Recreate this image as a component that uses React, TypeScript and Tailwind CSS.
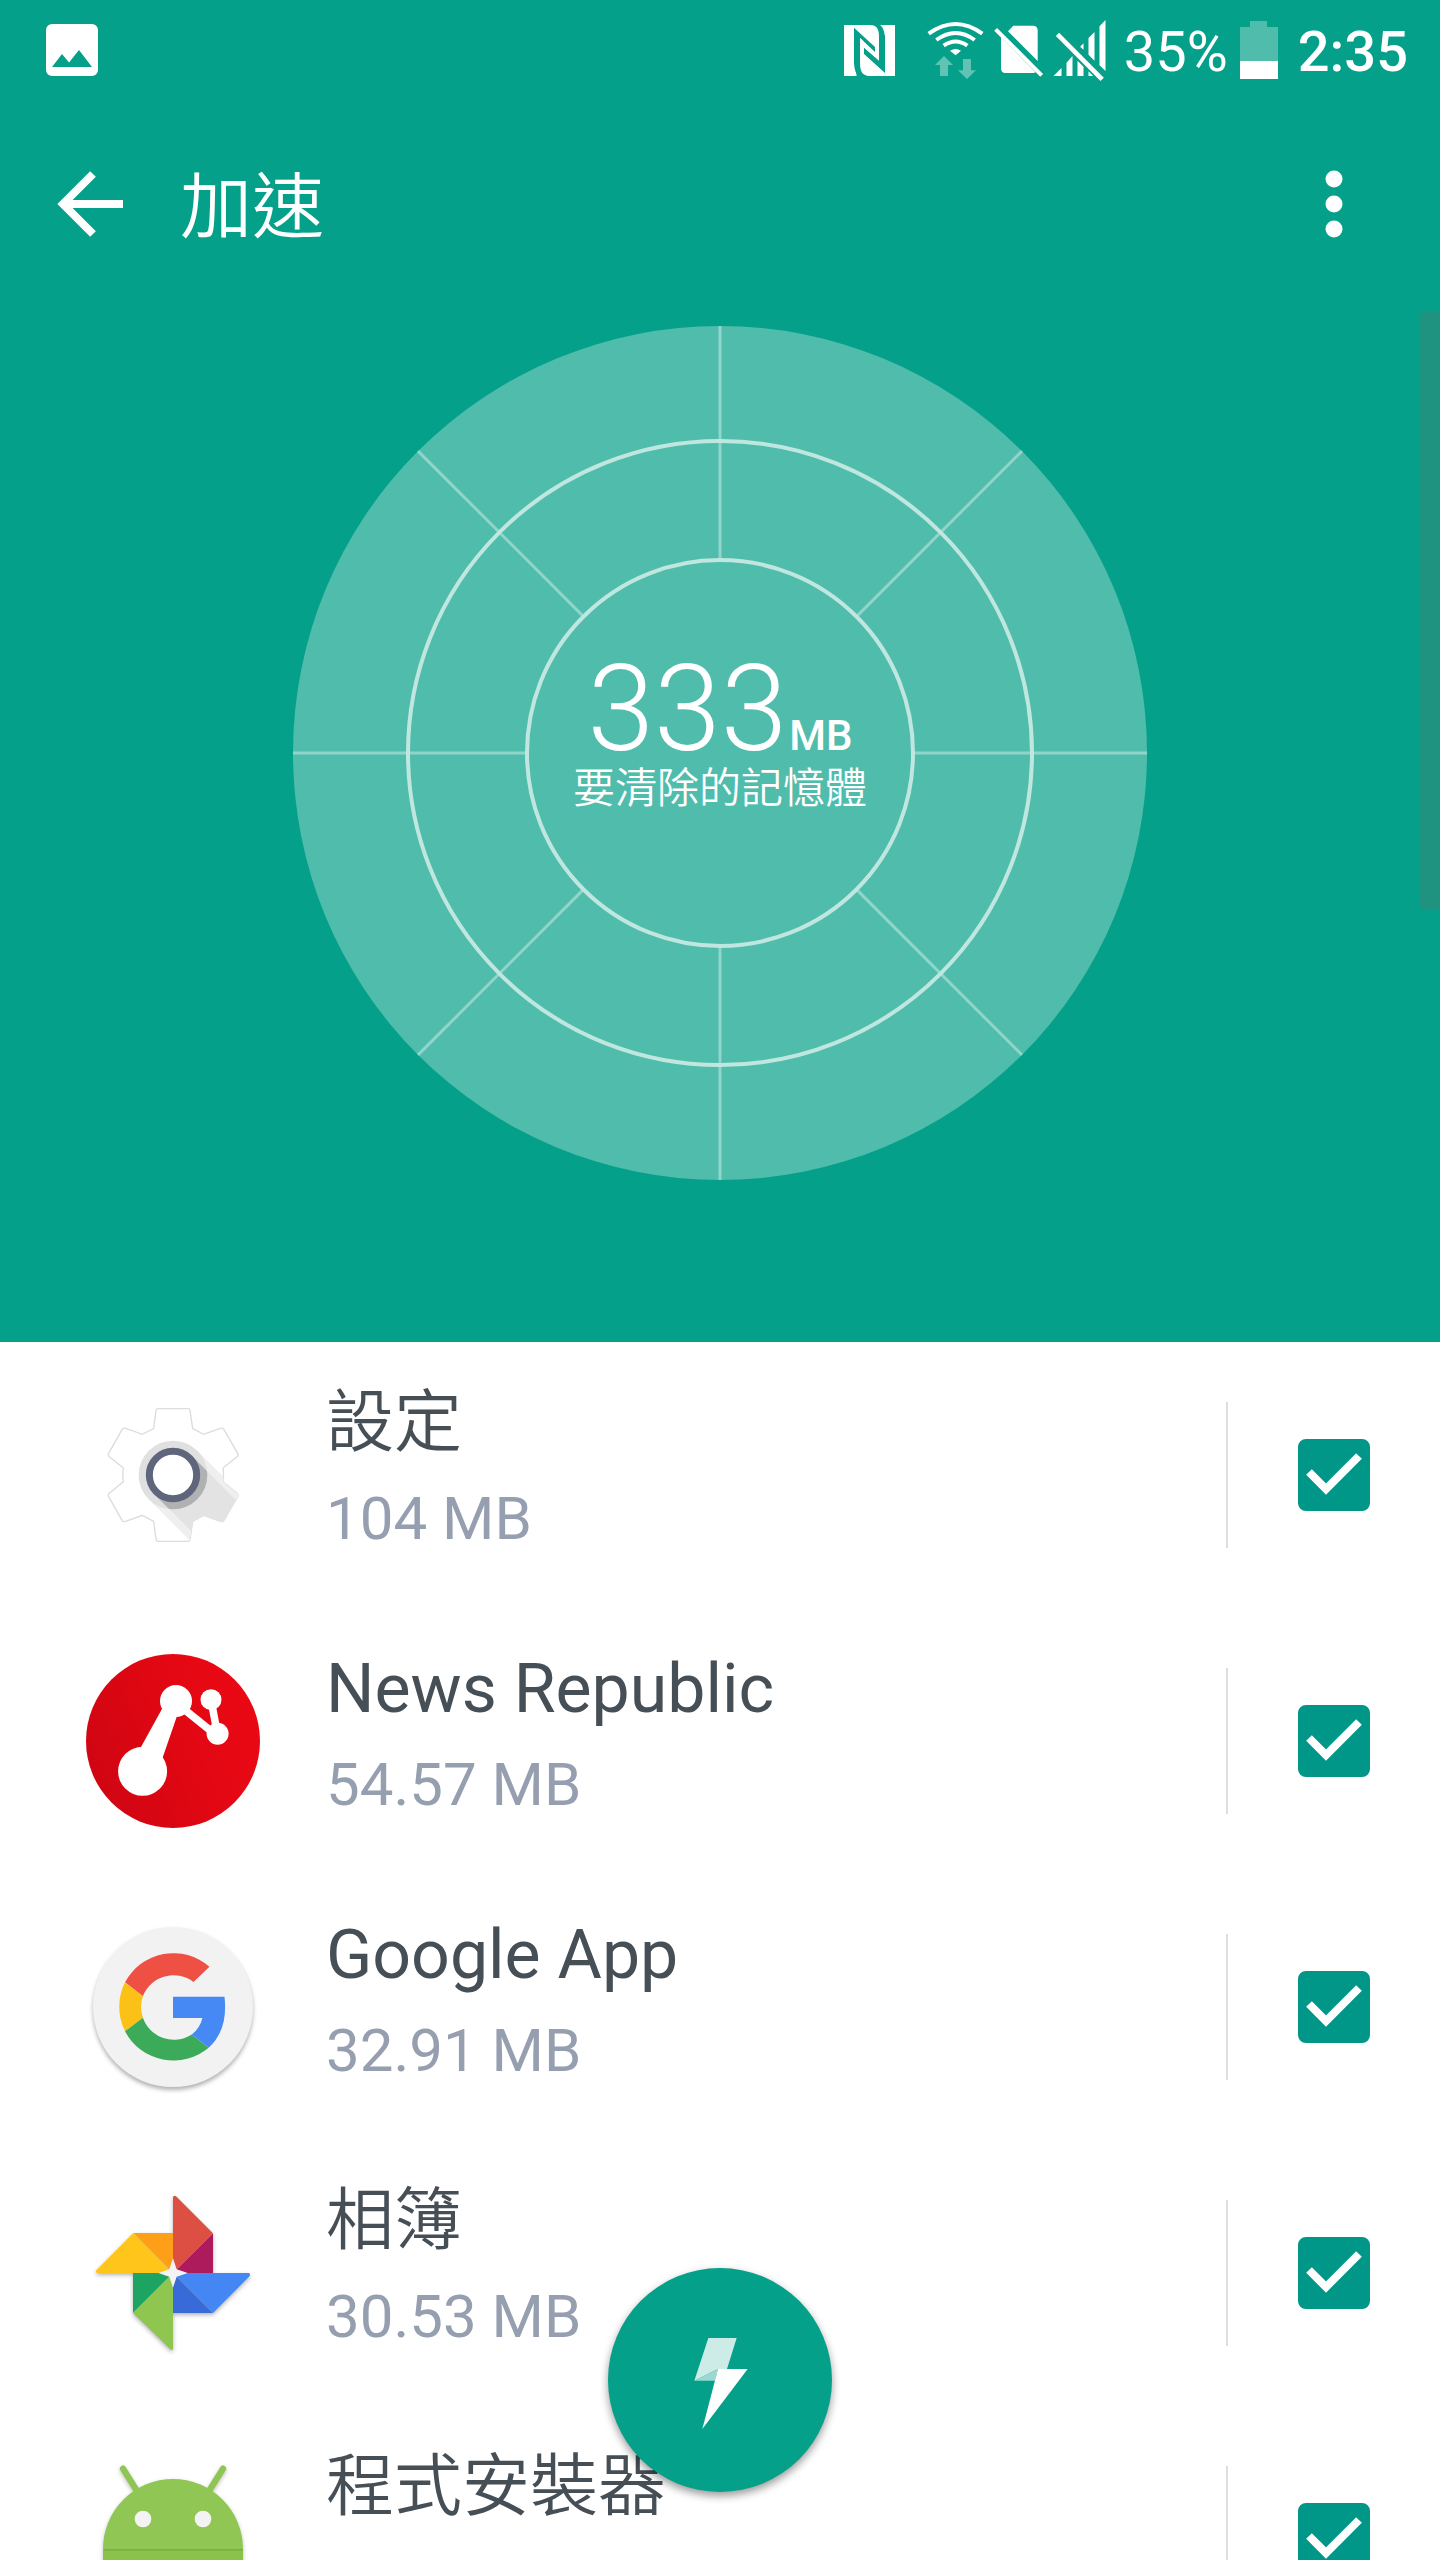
import React, { useState } from "react";

type AppItem = {
  id: string;
  name: string;
  lang: "zh-Hant" | "en";
  size?: string;
  icon: React.ReactNode;
};

/* ---------- status bar icons ---------- */

function PictureIcon() {
  return (
    <svg className="size-[52px]" viewBox="0 0 52 52" aria-hidden="true">
      <path
        fill="#fff"
        fillRule="evenodd"
        d="M6 0H46a6 6 0 0 1 6 6V46a6 6 0 0 1-6 6H6a6 6 0 0 1-6-6V6a6 6 0 0 1 6-6ZM6 43H46L33 26 23 38.500 16 30Z"
      />
    </svg>
  );
}

function NfcIcon() {
  return (
    <svg className="size-[51px]" viewBox="42 45 153 153" aria-hidden="true">
      <path fill="#fff" d="M42 45H72V150C72 175 76 190 86 198H42Z" />
      <path fill="#fff" d="M72 45H120C138 45 147 54 147 80V153L102 114V131L90 84 72 53Z" />
      <path fill="#fff" d="M195 198H165V92C165 68 160 52 150 45H195Z" />
      <path fill="#04a089" d="M72 53 135 111V126L90 84V198H80L72 150Z" />
      <path fill="#fff" d="M90 84 102 95V131L165 188V198H122C98 198 90 186 90 158Z" />
      <path fill="#04a089" d="M102 114 147 153V75H165V188L102 131Z" />
    </svg>
  );
}

function WifiIcon() {
  return (
    <svg className="h-[58px] w-[57px]" viewBox="288 30 171 174" aria-hidden="true">
      <g fill="none" stroke="#fff" strokeWidth="12">
        <path d="M293 68Q374 10 454 68" />
        <path d="M316 87Q374 45 431 87" />
        <path d="M338 104Q374 79 409 104" />
      </g>
      <path fill="#fff" d="M357 119Q374 109 390 119L374 133Z" />
      <g fill="#fff" opacity="0.37">
        <path d="M339 135 366 162H351V195H327V162H312Z" />
        <path d="M396 144H420V178H435L408 204 381 178H396Z" />
      </g>
    </svg>
  );
}

function NoSimIcon() {
  return (
    <svg className="h-[50px] w-[49px]" viewBox="487 46 147 150" overflow="visible" aria-hidden="true">
      <path fill="#fff" d="M529 65 545 48H604Q618 48 618 62V154Z" />
      <path fill="#fff" d="M508 83 612 188Q609 190 604 190H521Q508 190 508 176Z" />
      <path stroke="#fff" strokeWidth="12" d="M492 59 630 197" />
    </svg>
  );
}

function NoSignalIcon() {
  return (
    <svg className="h-[62px] w-[53px]" viewBox="672 27 156 186" aria-hidden="true">
      <path
        fill="#fff"
        d="M672 198 696 174V198ZM711 158 729 138V198H711ZM744 152 762 170V198H744ZM777 184 791 198H777ZM752 110 762 100V119ZM777 84 795 66V152L777 134ZM810 49 828 30V183L810 166Z"
      />
      <path stroke="#fff" strokeWidth="14" d="M684 73 818 208" />
    </svg>
  );
}

function BatteryIcon() {
  return (
    <svg className="h-[58px] w-[38px]" viewBox="0 0 38 58" aria-hidden="true">
      <path fill="#50bcac" d="M10 0H27V6H38V40H0V6H10Z" />
      <path fill="#fff" d="M0 40H38V58H0Z" />
    </svg>
  );
}

/* ---------- app icons ---------- */

const GEAR =
  "M294 206H384Q389 206 390 211L398 266 431 283 481 265Q488 263 492 269L533 340Q536 346 531 350L489 384Q492 405 489 425L531 460Q536 465 533 470L492 541Q488 547 481 544L431 526 398 544 390 598Q389 604 384 604H294Q289 604 288 598L281 544 247 526 197 544Q190 547 186 541L146 470Q143 465 148 460L190 425Q187 405 190 384L148 350Q143 346 146 340L186 269Q190 263 197 265L247 283 281 266 288 211Q289 206 294 206Z";

function SettingsAppIcon() {
  return (
    <svg viewBox="78 144 522 522" aria-hidden="true">
      <clipPath id="gear-clip">
        <path d={GEAR} />
      </clipPath>
      <clipPath id="gear-ring">
        <circle cx="339" cy="405" r="103" />
      </clipPath>
      <path d={GEAR} fill="#fff" stroke="#dcdcdc" strokeWidth="4" />
      <g clipPath="url(#gear-clip)">
        <path fill="#efefef" d="M412 332 612 532 466 678 266 478Z" />
        <path fill="#e3e3e3" d="M396 348 596 548 482 662 282 462Z" />
      </g>
      <circle cx="339" cy="405" r="103" fill="#e0e0e0" />
      <path clipPath="url(#gear-ring)" fill="#b0b1b2" d="M396 348 596 548 482 662 282 462Z" />
      <circle cx="339" cy="405" r="71" fill="#fff" stroke="#5f667b" strokeWidth="21" />
    </svg>
  );
}

function NewsAppIcon() {
  return (
    <svg viewBox="26 34 174 174" aria-hidden="true">
      <linearGradient id="news-bg" x1="0" y1="0.700" x2="1" y2="0.300">
        <stop offset="0" stopColor="#cf0512" />
        <stop offset="0.700" stopColor="#e50813" />
        <stop offset="1" stopColor="#ea0913" />
      </linearGradient>
      <circle cx="113" cy="121" r="87" fill="url(#news-bg)" />
      <g fill="#fff">
        <circle cx="116" cy="81" r="16" />
        <circle cx="82.600" cy="151.300" r="24.500" />
        <circle cx="151" cy="79.700" r="10.500" />
        <circle cx="157.600" cy="113.700" r="11" />
        <path d="M81 127 102.500 88 117 96 102.500 138Z" />
      </g>
      <g stroke="#fff" strokeWidth="7.500">
        <path d="M120 86 156 115" />
        <path d="M151 80 157.500 114" />
      </g>
    </svg>
  );
}

function GoogleAppIcon() {
  return (
    <svg viewBox="26 20 174 174" aria-hidden="true">
      <circle cx="113" cy="107" r="80" fill="#f2f2f2" className="drop-shadow-[0_3px_2px_rgba(0,0,0,0.3)]" />
      <path fill="#ee5044" d="M65 82.300A54.700 54.700 0 0 1 149.400 66.700L133.500 82A32.800 32.800 0 0 0 82.900 96.300Z" />
      <path fill="#fbc116" d="M65 82.300A54.700 54.700 0 0 0 65 131.300L82.900 117.700A32.800 32.800 0 0 1 82.900 96.300Z" />
      <path fill="#3cab59" d="M65 131.300A54.700 54.700 0 0 0 148.600 147.700L131.800 134.500A32.800 32.800 0 0 1 82.900 117.700Z" />
      <path fill="#4688f4" d="M113 96.700H164.500C167 118 162 136 148.600 147.700L131.800 134.500Q140 128 142.400 118H113Z" />
    </svg>
  );
}

function PhotosAppIcon() {
  return (
    <svg viewBox="78 78 522 522" className="drop-shadow-[0_2px_2px_rgba(0,0,0,0.3)]" aria-hidden="true">
      <path fill="#ff9f17" d="M220 219H339V339Z" />
      <path fill="#ffc51a" d="M220 219 339 339H111Q106 337 109 331Z" />
      <path fill="#ae1b5c" d="M459 220V339H339Z" />
      <path fill="#dd4f43" d="M339 112Q342 105 348 109L459 220 339 339Z" />
      <path fill="#1da362" d="M219 339H339L219 459Z" />
      <path fill="#8fc650" d="M339 339V567Q336 572 331 568L219 459Z" />
      <path fill="#386bd7" d="M339 339 459 459H339Z" />
      <path fill="#4487f4" d="M339 339H567Q572 343 569 348L459 459Z" />
      <path fill="#f3f3f3" d="M339 295 350 328 383 339 350 350 339 383 328 350 295 339 328 328Z" />
    </svg>
  );
}

function InstallerAppIcon() {
  return (
    <svg viewBox="78 876 522 522" className="drop-shadow-[0_2px_2px_rgba(0,0,0,0.25)]" aria-hidden="true">
      <g stroke="#8fc552" strokeWidth="19" strokeLinecap="round">
        <path d="M189 926 232 995" />
        <path d="M489 926 446 995" />
      </g>
      <path fill="#90c654" d="M129 1167A210 210 0 0 1 549 1167Z" />
      <path fill="#8bc34a" d="M129 1167H549V1350Q549 1374 525 1374H153Q129 1374 129 1350Z" />
      <path fill="#7bb042" d="M129 1167H549V1172H134L162 1200Z" />
      <circle cx="249" cy="1077" r="25" fill="#f3f3f3" />
      <circle cx="429" cy="1077" r="25" fill="#f3f3f3" />
    </svg>
  );
}

const APPS: AppItem[] = [
  { id: "settings", name: "設定", lang: "zh-Hant", size: "104 MB", icon: <SettingsAppIcon /> },
  { id: "news", name: "News Republic", lang: "en", size: "54.57 MB", icon: <NewsAppIcon /> },
  { id: "google", name: "Google App", lang: "en", size: "32.91 MB", icon: <GoogleAppIcon /> },
  { id: "photos", name: "相簿", lang: "zh-Hant", size: "30.53 MB", icon: <PhotosAppIcon /> },
  { id: "installer", name: "程式安裝器", lang: "zh-Hant", icon: <InstallerAppIcon /> },
];

/* ---------- sections ---------- */

function StatusBar() {
  return (
    <div className="flex h-[100px] items-center pr-[32px] pl-[46px] text-[56px] leading-none">
      <PictureIcon />
      <div className="ml-auto flex items-center">
        <NfcIcon />
        <span className="ml-[32px] flex items-center gap-[10px]">
          <WifiIcon />
          <NoSimIcon />
          <NoSignalIcon />
        </span>
        <span className="ml-[18px] pt-[4px]">35%</span>
        <span className="ml-[12px]">
          <BatteryIcon />
        </span>
        <span className="ml-[20px] pt-[4px] font-medium">2:35</span>
      </div>
    </div>
  );
}

function Toolbar() {
  return (
    <header className="flex h-[208px] items-center pr-[66px] pl-[50px]">
      <button type="button" aria-label="返回" className="flex size-[80px] items-center justify-center">
        <svg className="size-[68px]" viewBox="0 0 68 68" aria-hidden="true">
          <g fill="none" stroke="#fff" strokeWidth="8">
            <path d="M37 4 7 34 37 64" />
            <path d="M8 34H67" />
          </g>
        </svg>
      </button>
      <h1 className="ml-[50px] pt-[8px] text-[72px] leading-none font-[350]">加速</h1>
      <button type="button" aria-label="更多選項" className="ml-auto flex size-[80px] items-center justify-center">
        <svg className="h-[68px] w-[20px]" viewBox="0 0 20 68" fill="#fff" aria-hidden="true">
          <circle cx="10" cy="9" r="8.500" />
          <circle cx="10" cy="34" r="8.500" />
          <circle cx="10" cy="59" r="8.500" />
        </svg>
      </button>
    </header>
  );
}

function MemoryDial() {
  return (
    <div className="mx-auto grid w-[854px] place-items-center">
      <svg className="w-full [grid-area:1/1]" viewBox="-427 -427 854 854" aria-hidden="true">
        <circle r="427" fill="#50bcac" />
        {[0, 45, 90, 135, 180, 225, 270, 315].map((deg) => (
          <path key={deg} d="M194 0H427" stroke="#8fd5ca" strokeWidth="3" transform={`rotate(${deg})`} />
        ))}
        <g fill="none" stroke="#bfe7e0" strokeWidth="4">
          <circle r="312" />
          <circle r="193" />
        </g>
      </svg>
      <div className="flex flex-col items-center pb-[40px] [grid-area:1/1]">
        <p className="flex items-baseline gap-[2px] leading-none">
          <span className="text-[120px] leading-[112px] font-light">333</span>
          <span className="text-[42px] font-medium">MB</span>
        </p>
        <p className="text-[42px] leading-[48px] font-[350]">要清除的記憶體</p>
      </div>
    </div>
  );
}

function AppRow({ app, checked, onToggle }: { app: AppItem; checked: boolean; onToggle: () => void }) {
  return (
    <li className="flex h-[266px] shrink-0 items-center pr-[70px] pl-[86px]">
      <div className="size-[174px] shrink-0">{app.icon}</div>
      <label htmlFor={app.id} className="ml-[66px] flex-1 pb-[8px]">
        <span lang={app.lang} className="block text-[68px] leading-[96px] text-[#464e56] [&:lang(zh)]:font-[350]">
          {app.name}
        </span>
        <span className="block min-h-[96px] text-[60px] leading-[96px] text-[#969fb0]">{app.size}</span>
      </label>
      <div className="h-[146px] w-[2px] bg-[#dedede]" />
      <div className="ml-[70px] grid size-[72px]">
        <input
          id={app.id}
          type="checkbox"
          checked={checked}
          onChange={onToggle}
          className="peer size-[72px] appearance-none rounded-[8px] border-8 border-[#009688] [grid-area:1/1] checked:bg-[#009688]"
        />
        <svg
          className="pointer-events-none invisible size-[72px] [grid-area:1/1] peer-checked:visible"
          viewBox="0 0 72 72"
          aria-hidden="true"
        >
          <path fill="none" stroke="#fff" strokeWidth="8" d="M11 33 28 50 61 17" />
        </svg>
      </div>
    </li>
  );
}

export default function App() {
  const [selected, setSelected] = useState<string[]>(APPS.map((a) => a.id));

  const toggle = (id: string) =>
    setSelected((prev) => (prev.includes(id) ? prev.filter((x) => x !== id) : [...prev, id]));

  return (
    <main className="relative flex h-screen flex-col overflow-hidden bg-white font-[Roboto,'Noto_Sans_CJK_TC',sans-serif]">
      <section className="shrink-0 bg-[#04a089] pb-[162px] text-white">
        <StatusBar />
        <Toolbar />
        <div className="pt-[18px]">
          <MemoryDial />
        </div>
      </section>

      <ul className="flex min-h-0 flex-1 flex-col overflow-y-auto [scrollbar-width:none]">
        {APPS.map((app) => (
          <AppRow key={app.id} app={app} checked={selected.includes(app.id)} onToggle={() => toggle(app.id)} />
        ))}
      </ul>

      {/* scroll thumb */}
      <div className="absolute top-[312px] right-0 h-[597px] w-[20px] rounded-l-[4px] bg-[#1f9280]" />

      <button
        type="button"
        aria-label="加速"
        className="absolute bottom-[68px] left-1/2 flex size-[224px] -translate-x-1/2 items-center justify-center rounded-full bg-[#04a089] shadow-[0_4px_8px_rgba(0,0,0,0.4)]"
      >
        <svg className="size-[224px]" viewBox="84 84 672 672" aria-hidden="true">
          <path fill="#cdece7" d="M385 294H470L441 387H414L343 422Z" />
          <path fill="#9bd9d0" d="M343 422 414 387 405 422Z" />
          <path fill="#fff" d="M414 387H503L367 567Z" />
        </svg>
      </button>
    </main>
  );
}
